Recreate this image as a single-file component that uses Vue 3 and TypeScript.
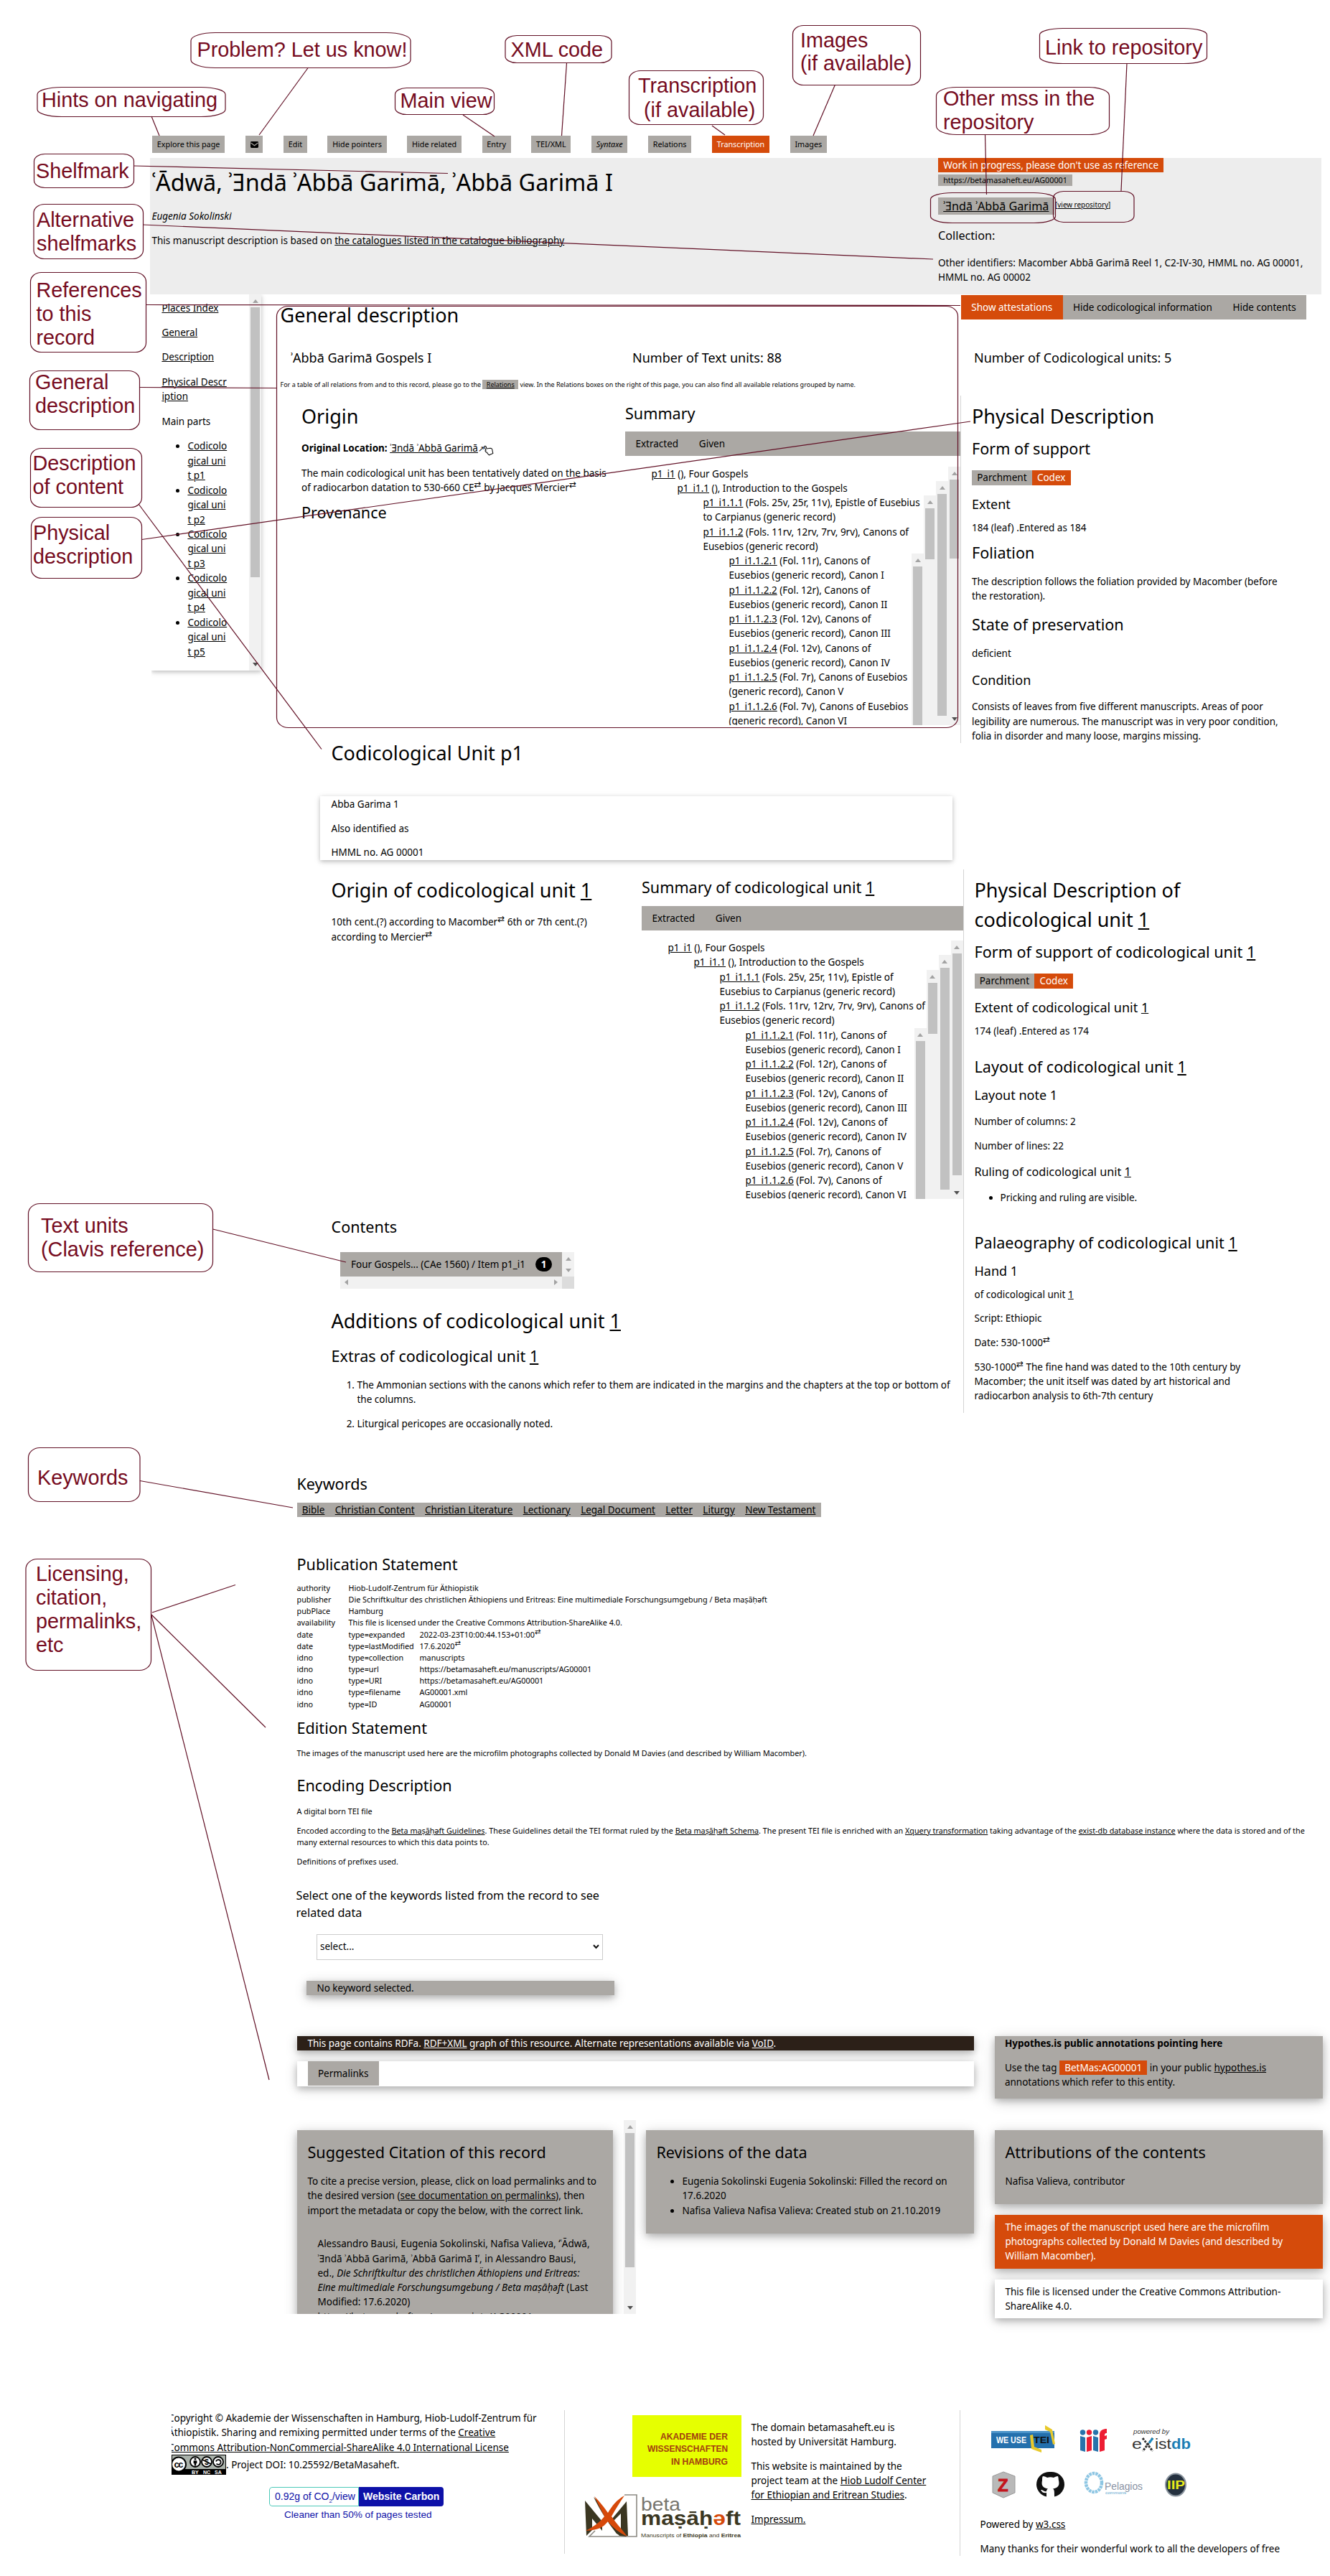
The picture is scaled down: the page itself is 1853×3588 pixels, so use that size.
<script setup lang="ts">
interface Callout {
  x: number
  y: number
  w: number
  h: number
  rx: number
  ry: number
  tx: number
  ty: number
  step?: number
  lines: string[]
}
interface Work {
  id: string
  head: string
  tail: string
}
interface Tree {
  level2: Work[]
  level3: Work[]
}

const toolbar = ['Edit', 'Hide pointers', 'Hide related', 'Entry', 'TEI/XML']

const callouts: Callout[] = [
  { x: 52, y: 121.5, w: 262, h: 41, rx: 34, ry: 10, tx: 58, ty: 148.5, lines: ['Hints on navigating'] },
  { x: 266, y: 45.5, w: 306, h: 49, rx: 34, ry: 11, tx: 274.5, ty: 78.5, lines: ['Problem? Let us know!'] },
  { x: 704, y: 49.5, w: 148, h: 38, rx: 16, ry: 9, tx: 711.5, ty: 78.5, lines: ['XML code'] },
  { x: 550.5, y: 122.5, w: 138, h: 37, rx: 16, ry: 9, tx: 557.5, ty: 149.5, lines: ['Main view'] },
  { x: 876.5, y: 98.5, w: 187, h: 75, rx: 16, ry: 12, tx: 889, ty: 129, step: 33.5, lines: ['Transcription', ' (if available)'] },
  { x: 1104.5, y: 35.5, w: 178, h: 83, rx: 15, ry: 12, tx: 1115, ty: 65.5, step: 32, lines: ['Images', '(if available)'] },
  { x: 1448.5, y: 39.5, w: 233, h: 49, rx: 32, ry: 9, tx: 1456, ty: 75.5, lines: ['Link to repository'] },
  { x: 1304.5, y: 121.5, w: 241, h: 66, rx: 28, ry: 12, tx: 1314, ty: 147, step: 33, lines: ['Other mss in the', 'repository'] },
  { x: 47.5, y: 214.5, w: 139, h: 47, rx: 15, ry: 10, tx: 50, ty: 247.5, lines: ['Shelfmark'] },
  { x: 47, y: 284.5, w: 152.5, h: 76, rx: 15, ry: 12, tx: 51, ty: 316, step: 32.8, lines: ['Alternative', 'shelfmarks'] },
  { x: 42.5, y: 379.5, w: 161, h: 111, rx: 15, ry: 13, tx: 50.5, ty: 414, step: 33, lines: ['References', 'to this', 'record'] },
  { x: 41.5, y: 516.5, w: 153, h: 82, rx: 15, ry: 13, tx: 49, ty: 542, step: 32.7, lines: ['General', 'description'] },
  { x: 42.5, y: 624.5, w: 155, h: 82, rx: 15, ry: 13, tx: 45.5, ty: 655, step: 32.7, lines: ['Description', 'of content'] },
  { x: 43.5, y: 720.5, w: 154, h: 85, rx: 15, ry: 13, tx: 46, ty: 751.8, step: 33, lines: ['Physical', 'description'] },
  { x: 39.5, y: 1676.5, w: 257, h: 95, rx: 16, ry: 14, tx: 57, ty: 1717, step: 32.6, lines: ['Text units', '(Clavis reference)'] },
  { x: 39.5, y: 2016.5, w: 155.5, h: 75, rx: 16, ry: 14, tx: 52, ty: 2068, lines: ['Keywords'] },
  { x: 36, y: 2171.5, w: 174.5, h: 155, rx: 16, ry: 14, tx: 50, ty: 2201.5, step: 33.2, lines: ['Licensing,', 'citation,', 'permalinks,', 'etc'] },
]

const pointers: number[][] = [
  [211, 162, 222, 189],
  [429.5, 94, 361, 188],
  [789.5, 88, 782.5, 189],
  [645, 160, 689, 190],
  [992, 175, 1010, 188],
  [1163.5, 118, 1133, 189],
  [1570, 88, 1562, 266],
  [1372.5, 187, 1374.5, 271],
  [186, 231, 624, 241.5],
  [199, 313, 1300, 361],
  [203.5, 424.5, 1338, 425.5],
  [195, 539.5, 386, 540.5],
  [193, 702, 448, 1043.5],
  [197.5, 751.5, 1352, 587],
  [296.6, 1712, 482, 1758],
  [195, 2062.5, 408, 2100],
  [212, 2246, 328, 2207.5],
  [211, 2249, 370, 2406],
  [211, 2250, 375, 2897],
]

const generic = 'Eusebios (generic record), Canon '
const trees: Tree[] = [
  {
    level2: [
      { id: 'p1_i1.1.1', head: '(Fols. 25v, 25r, 11v), Epistle of Eusebius', tail: 'to Carpianus (generic record)' },
      { id: 'p1_i1.1.2', head: '(Fols. 11rv, 12rv, 7rv, 9rv), Canons of', tail: 'Eusebios (generic record)' },
    ],
    level3: [
      { id: 'p1_i1.1.2.1', head: '(Fol. 11r), Canons of', tail: generic + 'I' },
      { id: 'p1_i1.1.2.2', head: '(Fol. 12r), Canons of', tail: generic + 'II' },
      { id: 'p1_i1.1.2.3', head: '(Fol. 12v), Canons of', tail: generic + 'III' },
      { id: 'p1_i1.1.2.4', head: '(Fol. 12v), Canons of', tail: generic + 'IV' },
      { id: 'p1_i1.1.2.5', head: '(Fol. 7r), Canons of Eusebios', tail: '(generic record), Canon V' },
      { id: 'p1_i1.1.2.6', head: '(Fol. 7v), Canons of Eusebios', tail: '(generic record), Canon VI' },
    ],
  },
  {
    level2: [
      { id: 'p1_i1.1.1', head: '(Fols. 25v, 25r, 11v), Epistle of', tail: 'Eusebius to Carpianus (generic record)' },
      { id: 'p1_i1.1.2', head: '(Fols. 11rv, 12rv, 7rv, 9rv), Canons of', tail: 'Eusebios (generic record)' },
    ],
    level3: [
      { id: 'p1_i1.1.2.1', head: '(Fol. 11r), Canons of', tail: generic + 'I' },
      { id: 'p1_i1.1.2.2', head: '(Fol. 12r), Canons of', tail: generic + 'II' },
      { id: 'p1_i1.1.2.3', head: '(Fol. 12v), Canons of', tail: generic + 'III' },
      { id: 'p1_i1.1.2.4', head: '(Fol. 12v), Canons of', tail: generic + 'IV' },
      { id: 'p1_i1.1.2.5', head: '(Fol. 7r), Canons of', tail: generic + 'V' },
      { id: 'p1_i1.1.2.6', head: '(Fol. 7v), Canons of', tail: generic + 'VI' },
    ],
  },
]

const units = [1, 2, 3, 4, 5]
const keywords = ['Bible', 'Christian Content', 'Christian Literature', 'Lectionary', 'Legal Document', 'Letter', 'Liturgy', 'New Testament']

const statement: { key: string; type?: string; value: string; sup?: boolean }[] = [
  { key: 'authority', value: 'Hiob-Ludolf-Zentrum für Äthiopistik' },
  { key: 'publisher', value: 'Die Schriftkultur des christlichen Äthiopiens und Eritreas: Eine multimediale Forschungsumgebung / Beta maṣāḥəft' },
  { key: 'pubPlace', value: 'Hamburg' },
  { key: 'availability', value: 'This file is licensed under the Creative Commons Attribution-ShareAlike 4.0.' },
  { key: 'date', type: 'expanded', value: '2022-03-23T10:00:44.153+01:00', sup: true },
  { key: 'date', type: 'lastModified', value: '17.6.2020', sup: true },
  { key: 'idno', type: 'collection', value: 'manuscripts' },
  { key: 'idno', type: 'url', value: 'https://betamasaheft.eu/manuscripts/AG00001' },
  { key: 'idno', type: 'URI', value: 'https://betamasaheft.eu/AG00001' },
  { key: 'idno', type: 'filename', value: 'AG00001.xml' },
  { key: 'idno', type: 'ID', value: 'AG00001' },
]
</script>

<template>
  <div class="page">
    <nav class="toolbar">
      <span class="btn">Explore this page</span>
      <span class="btn mail">
        <svg width="11" height="9" viewBox="0 0 11 9"><rect width="11" height="9" rx="1.4" /><path d="M.5 2 L5.5 5.8 L10.5 2" fill="none" stroke="#aba8a4" stroke-width="1.1" /></svg>
      </span>
      <span v-for="t in toolbar" :key="t" class="btn">{{ t }}</span>
      <span class="btn"><em>Syntaxe</em></span>
      <span class="btn">Relations</span>
      <span class="btn hot">Transcription</span>
      <span class="btn">Images</span>
    </nav>

    <header class="head">
      <div class="head-main">
        <h1>ʿĀdwā, ʾƎndā ʾAbbā Garimā, ʾAbbā Garimā I</h1>
        <p><em>Eugenia Sokolinski</em></p>
        <p>This manuscript description is based on <a>the catalogues listed in the catalogue bibliography</a></p>
      </div>
      <div class="head-side">
        <div class="row"><span class="tag hot">Work in progress, please don't use as reference</span></div>
        <div class="row uri"><span class="tag">https://betamasaheft.eu/AG00001</span></div>
        <div class="row repo"><span class="tag"><a>ʾƎndā ʾAbbā Garimā</a></span><span class="view">[<a>view repository</a>]</span></div>
        <div class="collection">Collection:</div>
        <p>Other identifiers: Macomber Abbā Garimā Reel 1, C2-IV-30, HMML no. AG 00001,<br>HMML no. AG 00002</p>
      </div>
    </header>

    <div class="upper">
      <aside class="index">
        <div class="index-list">
          <p><a>Places Index</a></p>
          <p><a>General</a></p>
          <p><a>Description</a></p>
          <p><a>Physical Descr</a><br><a>iption</a></p>
          <p>Main parts</p>
          <ul>
            <li v-for="u in units" :key="u"><a>Codicolo</a><br><a>gical uni</a><br><a>t p{{ u }}</a></li>
          </ul>
        </div>
        <div class="sb"><i class="up"></i><b class="thumb"></b><i class="down"></i></div>
      </aside>
      <div class="general">
        <div class="general-top">
          <h2>General description</h2>
          <div class="switches"><span class="hot">Show attestations</span><span>Hide codicological information</span><span>Hide contents</span></div>
        </div>
        <div class="counts">
          <h4>ʾAbbā Garimā Gospels I</h4>
          <h4>Number of Text units: 88</h4>
          <h4>Number of Codicological units: 5</h4>
        </div>
        <div class="note">For a table of all relations from and to this record, please go to the <span class="tag"><a>Relations</a></span> view. In the Relations boxes on the right of this page, you can also find all available relations grouped by name.</div>
        <div class="cols">
          <section class="origin">
            <h2>Origin</h2>
            <p><strong>Original Location:</strong> <a>ʾƎndā ʾAbbā Garimā</a><span class="ne">↗</span>
              <svg class="hand" width="15" height="15" viewBox="0 0 15 15"><path d="M1.500 2.200 C2.500 .8 4 1.200 4.300 2.500 L5 5 L10 4.200 C12 4.200 13 5.500 13 7.500 L13.800 11.500 L8.500 13.800 L6.500 12 L5.500 10.200 L3.600 9.200 C2.600 8.200 3 7 4 7 L2 3.600 Z" fill="none" stroke="#111" stroke-width="1.1" /></svg>
            </p>
            <p class="dating">The main codicological unit has been tentatively dated on the basis<br>of radiocarbon datation to 530-660 CE<sup>⇄</sup> by Jacques Mercier<sup>⇄</sup></p>
            <h3>Provenance</h3>
          </section>
          <section class="summary">
            <h3>Summary</h3>
            <div class="tabs"><span>Extracted</span><span>Given</span></div>
            <div class="tree first">
              <div class="grow">
                <div><a>p1_i1</a> (), Four Gospels</div>
                <div class="lv l1">
                  <div class="grow">
                    <div><a>p1_i1.1</a> (), Introduction to the Gospels</div>
                    <div class="lv l2">
                      <div class="grow">
                        <div v-for="w in trees[0].level2" :key="w.id"><a>{{ w.id }}</a> {{ w.head }}<br>{{ w.tail }}</div>
                        <div class="lv l3">
                          <div class="grow"><div v-for="w in trees[0].level3" :key="w.id"><a>{{ w.id }}</a> {{ w.head }}<br>{{ w.tail }}</div></div>
                          <div class="sb"><i class="up"></i><b class="thumb"></b></div>
                        </div>
                      </div>
                      <div class="sb"><i class="up"></i><b class="thumb"></b></div>
                    </div>
                  </div>
                  <div class="sb"><i class="up"></i><b class="thumb"></b></div>
                </div>
              </div>
              <div class="sb"><i class="up"></i><b class="thumb"></b><i class="down"></i></div>
            </div>
          </section>
          <section class="physical">
            <h2>Physical Description</h2>
            <h3>Form of support</h3>
            <p class="tags"><span class="tag">Parchment</span><span class="tag hot">Codex</span></p>
            <h4>Extent</h4>
            <div>184 (leaf) .Entered as 184</div>
            <h3>Foliation</h3>
            <p>The description follows the foliation provided by Macomber (before<br>the restoration).</p>
            <h3>State of preservation</h3>
            <p>deficient</p>
            <h4>Condition</h4>
            <p>Consists of leaves from five different manuscripts. Areas of poor<br>legibility are numerous. The manuscript was in very poor condition,<br>folia in disorder and many loose, margins missing.</p>
          </section>
        </div>
      </div>
    </div>

    <div class="unit">
      <h2 class="unit-title">Codicological Unit p1</h2>
      <div class="ident">
        <p>Abba Garima 1</p>
        <p>Also identified as</p>
        <p>HMML no. AG 00001</p>
      </div>
      <div class="unit-cols">
        <div class="unit-left">
          <div class="unit-pair">
            <section class="unit-origin">
              <h2>Origin of codicological unit <a>1</a></h2>
              <p>10th cent.(?) according to Macomber<sup>⇄</sup> 6th or 7th cent.(?)<br>according to Mercier<sup>⇄</sup></p>
            </section>
            <section class="unit-summary">
              <h3>Summary of codicological unit <a>1</a></h3>
              <div class="tabs"><span>Extracted</span><span>Given</span></div>
              <div class="tree second">
                <div class="grow">
                  <div><a>p1_i1</a> (), Four Gospels</div>
                  <div class="lv l1">
                    <div class="grow">
                      <div><a>p1_i1.1</a> (), Introduction to the Gospels</div>
                      <div class="lv l2">
                        <div class="grow">
                          <div v-for="w in trees[1].level2" :key="w.id"><a>{{ w.id }}</a> {{ w.head }}<br>{{ w.tail }}</div>
                          <div class="lv l3">
                            <div class="grow"><div v-for="w in trees[1].level3" :key="w.id"><a>{{ w.id }}</a> {{ w.head }}<br>{{ w.tail }}</div></div>
                            <div class="sb"><i class="up"></i><b class="thumb"></b></div>
                          </div>
                        </div>
                        <div class="sb"><i class="up"></i><b class="thumb"></b></div>
                      </div>
                    </div>
                    <div class="sb"><i class="up"></i><b class="thumb"></b></div>
                  </div>
                </div>
                <div class="sb"><i class="up"></i><b class="thumb"></b><i class="down"></i></div>
              </div>
            </section>
          </div>
          <h3 class="contents-title">Contents</h3>
          <div class="item">
            <div class="item-main">
              <div class="item-row"><span>Four Gospels... (CAe 1560) / Item p1_i1</span><span class="count">1</span></div>
              <div class="hbar"><i class="left"></i><i class="right"></i></div>
            </div>
            <div class="item-side"><div class="vbar"><i class="up"></i><i class="down"></i></div></div>
          </div>
          <h2 class="additions">Additions of codicological unit <a>1</a></h2>
          <h3 class="extras">Extras of codicological unit <a>1</a></h3>
          <ol>
            <li>The Ammonian sections with the canons which refer to them are indicated in the margins and the chapters at the top or bottom of<br>the columns.</li>
            <li>Liturgical pericopes are occasionally noted.</li>
          </ol>
        </div>
        <section class="unit-physical">
          <h2>Physical Description of<br>codicological unit <a>1</a></h2>
          <h3>Form of support of codicological unit <a>1</a></h3>
          <p class="tags"><span class="tag">Parchment</span><span class="tag hot">Codex</span></p>
          <h4>Extent of codicological unit <a>1</a></h4>
          <div>174 (leaf) .Entered as 174</div>
          <h3 class="layout">Layout of codicological unit <a>1</a></h3>
          <h4>Layout note 1</h4>
          <p>Number of columns: 2</p>
          <p>Number of lines: 22</p>
          <h5>Ruling of codicological unit <a>1</a></h5>
          <ul><li>Pricking and ruling are visible.</li></ul>
          <h3 class="palaeo">Palaeography of codicological unit <a>1</a></h3>
          <h4>Hand 1</h4>
          <div>of codicological unit <a>1</a></div>
          <p>Script: Ethiopic</p>
          <p>Date: 530-1000<sup>⇄</sup></p>
          <p>530-1000<sup>⇄</sup> The fine hand was dated to the 10th century by<br>Macomber; the unit itself was dated by art historical and<br>radiocarbon analysis to 6th-7th century</p>
        </section>
      </div>
    </div>

    <div class="meta">
      <h3>Keywords</h3>
      <div class="keywords"><span v-for="k in keywords" :key="k"><a>{{ k }}</a></span></div>
      <h3 class="pub">Publication Statement</h3>
      <div class="statement">
        <div v-for="(s, i) in statement" :key="i" class="srow">
          <span class="k">{{ s.key }}</span><span v-if="s.type" class="t">type={{ s.type }}</span><span>{{ s.value }}<sup v-if="s.sup">⇄</sup></span>
        </div>
      </div>
      <h3 class="edition">Edition Statement</h3>
      <p>The images of the manuscript used here are the microfilm photographs collected by Donald M Davies (and described by William Macomber).</p>
      <h3 class="encoding">Encoding Description</h3>
      <p>A digital born TEI file</p>
      <p>Encoded according to the <a>Beta maṣāḥəft Guidelines</a>. These Guidelines detail the TEI format ruled by the <a>Beta maṣāḥəft Schema</a>. The present TEI file is enriched with an <a>Xquery transformation</a> taking advantage of the <a>exist-db database instance</a> where the data is stored and of the<br>many external resources to which this data points to.</p>
      <p>Definitions of prefixes used.</p>
      <div class="choose">Select one of the keywords listed from the record to see<br>related data</div>
      <div class="select"><span>select...</span><svg width="9" height="7" viewBox="0 0 9 7"><path d="M1 1.3 L4.5 5 L8 1.3" fill="none" stroke="#111" stroke-width="2" /></svg></div>
      <div class="panel nokey">No keyword selected.</div>

      <div class="links">
        <div class="links-left">
          <div class="rdf">This page contains RDFa. <a>RDF+XML</a> graph of this resource. Alternate representations available via <a>VoID</a>.</div>
          <div class="perma"><span>Permalinks</span></div>
        </div>
        <div class="hypo panel">
          <div><strong>Hypothes.is public annotations pointing here</strong></div>
          <p>Use the tag <span class="tag hot">BetMas:AG00001</span> in your public <a>hypothes.is</a><br>annotations which refer to this entity.</p>
        </div>
      </div>

      <div class="credits">
        <div class="cite-wrap">
          <div class="cite-clip">
            <div class="cite panel">
              <h3>Suggested Citation of this record</h3>
              <p>To cite a precise version, please, click on load permalinks and to<br>the desired version (<a>see documentation on permalinks</a>), then<br>import the metadata or copy the below, with the correct link.</p>
              <div class="quote">Alessandro Bausi, Eugenia Sokolinski, Nafisa Valieva, ʻʿĀdwā,<br>ʾƎndā ʾAbbā Garimā, ʾAbbā Garimā Iʼ, in Alessandro Bausi,<br>ed., <em>Die Schriftkultur des christlichen Äthiopiens und Eritreas:<br>Eine multimediale Forschungsumgebung / Beta maṣāḥəft</em> (Last<br>Modified: 17.6.2020)<br>https://betamasaheft.eu/manuscripts/AG00001</div>
            </div>
          </div>
          <div class="sb"><i class="up"></i><b class="thumb"></b><i class="down"></i></div>
        </div>
        <div class="revisions panel">
          <h3>Revisions of the data</h3>
          <ul>
            <li>Eugenia Sokolinski Eugenia Sokolinski: Filled the record on<br>17.6.2020</li>
            <li>Nafisa Valieva Nafisa Valieva: Created stub on 21.10.2019</li>
          </ul>
        </div>
        <div class="attrib">
          <div class="panel who"><h3>Attributions of the contents</h3><p>Nafisa Valieva, contributor</p></div>
          <div class="panel hot photos">The images of the manuscript used here are the microfilm<br>photographs collected by Donald M Davies (and described by<br>William Macomber).</div>
          <div class="panel plain">This file is licensed under the Creative Commons Attribution-<br>ShareAlike 4.0.</div>
        </div>
      </div>
    </div>

    <footer class="foot">
      <section class="legal">
        <div class="legal-text">
          <div>Copyright © Akademie der Wissenschaften in Hamburg, Hiob-Ludolf-Zentrum für</div>
          <div>Äthiopistik. Sharing and remixing permitted under terms of the <a>Creative</a></div>
          <div><a>Commons Attribution-NonCommercial-ShareAlike 4.0 International License</a></div>
        </div>
        <div class="cc">
          <svg width="76" height="28" viewBox="0 0 76 28">
            <rect width="76" height="28" fill="#000" /><rect x="1" y="1" width="74" height="19" fill="#aab2ab" />
            <circle cx="10" cy="13.5" r="10" fill="#fff" stroke="#000" stroke-width="2" />
            <text x="3.6" y="17.6" font-size="13" font-weight="bold" textLength="13">cc</text>
            <g fill="#fff" stroke="#000" stroke-width="1.8"><circle cx="33" cy="10" r="7" /><circle cx="49" cy="10" r="7" /><circle cx="65" cy="10" r="7" /></g>
            <circle cx="33" cy="6" r="1.5" /><path d="M30.6 8.2 h4.8 v4 h-1.2 v3.4 h-2.4 v-3.4 h-1.2 Z" />
            <text x="46" y="14" font-size="10.5" font-weight="bold">$</text><path d="M43 7 L55 13" stroke="#000" stroke-width="1.4" />
            <path d="M62 9.5 a3.4 3.4 0 1 1 .6 3" fill="none" stroke="#000" stroke-width="1.8" />
            <g fill="#fff" font-size="7" font-weight="bold"><text x="28" y="26.6">BY</text><text x="44" y="26.6">NC</text><text x="60" y="26.6">SA</text></g>
          </svg>
          <span>. Project DOI: 10.25592/BetaMasaheft.</span>
        </div>
        <div class="carbon"><span class="grams">0.92g of CO<sub>2</sub>/view</span><span class="brand">Website Carbon</span></div>
        <div class="cleaner">Cleaner than 50% of pages tested</div>
      </section>
      <section class="partners">
        <div class="partner-logos">
          <svg class="akademie" width="152" height="86" viewBox="0 0 152 86">
            <rect width="152" height="86" fill="#e6ff00" />
            <g fill="#a3400f" font-size="12" font-weight="bold">
              <text x="39" y="34" textLength="94" lengthAdjust="spacingAndGlyphs">AKADEMIE DER</text>
              <text x="21" y="51" textLength="112" lengthAdjust="spacingAndGlyphs">WISSENSCHAFTEN</text>
              <text x="54" y="68.5" textLength="79" lengthAdjust="spacingAndGlyphs">IN HAMBURG</text>
            </g>
          </svg>
          <svg class="beta" width="218" height="64" viewBox="0 0 218 64">
            <path d="M55 1 H72 V59 H6 L14 51" fill="none" stroke="#8d8b84" stroke-width="1.6" />
            <path d="M0 9 L24 38 V51 L10 34 V50 L2 58 Z" fill="#3b3722" />
            <path d="M58 10 L33 40 L44 55 L50 58 H60 Z" fill="#3b3722" /><path d="M50 27 V51 L39 38 Z" fill="#fff" />
            <path d="M12 4 C22 14 38 38 58 59 L48 58 C34 44 22 24 12 4 Z" fill="#3b3722" />
            <path d="M13 3 C22 12 28 20 32 26 C38 16 44 8 55 2 C48 12 42 22 37 31 C43 40 50 47 59 59 C48 54 38 46 32 38 C25 47 18 50 1 51 C14 44 22 38 27 31 Z" fill="#d6490a" />
            <text x="78" y="23" font-size="25" fill="#77756d" font-weight="300" textLength="55" lengthAdjust="spacingAndGlyphs">beta</text>
            <text x="78" y="43" font-size="27" font-weight="bold" fill="#3b3722" textLength="139" lengthAdjust="spacingAndGlyphs">maṣāḥ<tspan fill="#d6490a">ə</tspan>ft</text>
            <text x="78" y="60" font-size="7.6" fill="#3b3722" textLength="139" lengthAdjust="spacingAndGlyphs">Manuscripts of <tspan font-weight="bold">Ethiopia</tspan> and <tspan font-weight="bold">Eritrea</tspan></text>
          </svg>
        </div>
        <div class="partner-text">
          <p>The domain betamasaheft.eu is<br>hosted by Universität Hamburg.</p>
          <p>This website is maintained by the<br>project team at the <a>Hiob Ludolf Center</a><br><a>for Ethiopian and Eritrean Studies</a>.</p>
          <p><a>Impressum.</a></p>
        </div>
      </section>
      <section class="tools">
        <svg class="logos" width="310" height="110" viewBox="0 0 310 110">
          <rect x="0" y="8" width="88" height="24" fill="#2470ad" /><rect x="0" y="8" width="88" height="3" fill="#4b93c9" />
          <path d="M75 0 L85 6 L89 26 L86 27 L82 9 L75 6 Z M54 14 L58 13 L60 30 L70 34 L70 38 L56 33 Z" fill="#e8c92b" />
          <text x="7" y="24.5" font-size="12" font-weight="bold" fill="#fff" textLength="42" lengthAdjust="spacingAndGlyphs">WE USE</text>
          <text x="59" y="24.5" font-size="12" font-weight="bold" fill="#111" textLength="22" lengthAdjust="spacingAndGlyphs">TEI</text>
          <g transform="translate(123 4)">
            <path d="M1 11 L8 13 V33 L1 31 Z" fill="#2873ab" /><circle cx="4.5" cy="6" r="3.7" fill="#2873ab" />
            <path d="M10 13 L17 11 V31 L10 33 Z" fill="#ed1d33" /><circle cx="13.5" cy="6" r="3.7" fill="#ed1d33" />
            <path d="M19 11 L26 13 V33 L19 31 Z" fill="#2873ab" /><circle cx="22.5" cy="6" r="3.7" fill="#2873ab" />
            <path d="M28 33 V9 C28 3 33 1 38 1 V7 C35 7 35 9 35 11 L38 10 V15 L35 16 V31 Z" fill="#ed1d33" />
          </g>
          <text x="198" y="12" font-size="9" font-style="italic" fill="#333" textLength="50" lengthAdjust="spacingAndGlyphs">powered by</text>
          <text x="196" y="33" font-size="21" fill="#333" textLength="14" lengthAdjust="spacingAndGlyphs">e</text>
          <path d="M211 18 L225 36 M225 18 L211 36" stroke="#333" stroke-width="3" stroke-dasharray="3 1.5" /><path d="M225 18 L220 25" stroke="#1c8bc0" stroke-width="3" />
          <text x="228" y="33" font-size="21" fill="#333" textLength="23" lengthAdjust="spacingAndGlyphs">ist</text>
          <text x="251" y="33" font-size="21" font-weight="bold" fill="#1c7fb5" textLength="27" lengthAdjust="spacingAndGlyphs">db</text>
          <path d="M17 65 L33 71 V94 L17 101 L2 94 V71 Z" fill="#b9b9b9" stroke="#999" /><text x="9" y="92" font-size="24" font-weight="bold" fill="#c3151b" stroke="#c3151b">Z</text>
          <path d="M82.500 65 A18 17.500 0 0 0 77 99.500 V94 C71 95 70.500 92 69 90 C73 90 73 93 77 92 C77 90 78 89 79 88.500 C70 87 70 82 71 77 C71 74 71 72 72 71 C75 71 76 72 78 73 C81 72 84 72 87 73 C89 72 90 71 93 71 C94 74 93.500 75 94 77 C95 82 95 87 86 88.500 C88 90 88 92 88 99.500 A18 17.500 0 0 0 82.500 65 Z" fill="#111" />
          <ellipse cx="143" cy="80" rx="11" ry="13" fill="none" stroke="#8ec6e3" stroke-width="4.500" stroke-dasharray="3.500 1" />
          <text x="158" y="90" font-size="15" fill="#8a93a5" textLength="53" lengthAdjust="spacingAndGlyphs">Pelagios</text>
          <text x="159" y="96" font-size="5" fill="#5ba7cf" textLength="29" lengthAdjust="spacingAndGlyphs">commons</text>
          <ellipse cx="257" cy="83" rx="14" ry="15.500" fill="#25313f" stroke="#8a949e" stroke-width="2" /><text x="245" y="89" font-size="16" font-weight="bold" fill="#e8ec1a" textLength="25" lengthAdjust="spacingAndGlyphs">IIP</text>
        </svg>
        <p>Powered by <a>w3.css</a></p>
        <p>Many thanks for their wonderful work to all the developers of free</p>
      </section>
    </footer>

    <svg class="annotations" width="1853" height="3588" viewBox="0 0 1853 3588">
      <g class="ink">
        <rect v-for="(c, i) in callouts" :key="'c' + i" :x="c.x" :y="c.y" :width="c.w" :height="c.h" :rx="c.rx" :ry="c.ry" />
        <rect x="1296.500" y="268.500" width="174" height="42" rx="30" ry="9" />
        <rect x="1467.500" y="266.500" width="112.500" height="43" rx="14" ry="9" />
        <rect x="385.500" y="426.500" width="949" height="587" rx="16" ry="14" />
        <line v-for="(p, i) in pointers" :key="'p' + i" :x1="p[0]" :y1="p[1]" :x2="p[2]" :y2="p[3]" />
      </g>
      <g v-for="(c, i) in callouts" :key="'t' + i" class="label">
        <text v-for="(l, j) in c.lines" :key="j" :x="c.tx" :y="c.ty + j * (c.step ?? 0)">{{ l }}</text>
      </g>
    </svg>
  </div>
</template>

<style>
body { margin: 0; background: #fff; }
</style>

<style scoped>
.page {
  position: relative;
  width: 1853px;
  height: 3588px;
  overflow: hidden;
  background: #fff;
  color: #000;
  font-family: "Noto Sans", "Open Sans", sans-serif;
  font-size: 13.5px;
  line-height: 20.25px;
  white-space: nowrap;
}
a { text-decoration: underline; }
h1, h2, h3, h4, h5 { margin: 9px 0; font-weight: 400; line-height: 1.5; }
h1 { font-size: 32.4px; }
h2 { font-size: 27px; }
h3 { font-size: 21.6px; }
h4 { font-size: 18px; }
h5 { font-size: 16.2px; }
p { margin: 13.5px 0; }
ul, ol { margin: 13.5px 0; padding-left: 36px; }
sup { font-size: 12px; line-height: 0; font-family: "DejaVu Sans", sans-serif; }
.tag { display: inline-block; padding: 0 7.2px; background: #aba8a4; }

.toolbar { display: flex; gap: 28.6px; padding: 189.4px 0 0 212px; height: 23.4px; font-size: 10.8px; line-height: 16.2px; }
.btn { padding: 3.6px 6.8px; background: #aba8a4; }
.mail { display: flex; align-items: center; }
.hot, .tag.hot, .btn.hot { background: #d54b0b; color: #fff; }

.head { display: flex; margin: 7.2px 0 0 209px; width: 1632px; height: 190px; background: #ededed; }
.head-main { width: 1095.5px; padding-left: 2.5px; }
.head-side { display: flow-root; }
.row { height: 20.25px; }
.uri { margin-top: 2.5px; height: 16.2px; font-size: 10.8px; line-height: 16.2px; }
.repo { display: flex; align-items: flex-start; margin-top: 16px; height: 24.3px; font-size: 16.2px; line-height: 24.3px; }
.view { padding-left: 1.5px; font-size: 9.9px; line-height: 20px; }
.collection { margin-top: 16.5px; font-size: 16.2px; line-height: 24.3px; }
.head-side p { margin-top: 15.500px; }

.upper { display: flex; height: 611px; margin-left: 211px; }
.index { display: flex; width: 153px; height: 524px; box-shadow: 0 2px 5px rgba(0, 0, 0, .16), 0 2px 9px rgba(0, 0, 0, .12); clip-path: inset(0 -10px -14px 0); }
.index-list { flex: 1; padding-left: 14.4px; margin-top: -5.600px; overflow: hidden; }
.index p { margin: 14.200px 0; }
.index ul { margin: 14.500px 0 0; line-height: 20.450px; }
.sb { flex: none; display: flex; flex-direction: column; align-items: center; width: 17px; background: #f1f1f1; }
.up { margin: 7px 0 6px; border: 4px solid transparent; border-top: 0; border-bottom: 5px solid #a3a3a3; }
.down { margin: auto 0 6px; border: 4px solid transparent; border-bottom: 0; border-top: 5px solid #505050; }
.thumb { flex: none; width: 13px; height: 376px; background: #c1c1c1; }

.general { width: 1478px; }
.general-top { display: flex; justify-content: space-between; height: 74.8px; padding-left: 26.500px; }
.general-top h2 { margin-top: 9px; }
.switches { display: flex; align-self: flex-start; margin: 1px 22px 0 0; background: #aba8a4; }
.switches span { padding: 6.800px 14.4px; }
.counts { display: flex; padding-left: 41px; }
.counts h4 { margin: 0; width: 476px; }
.note { margin: 17px 0 0 26.500px; font-size: 9px; line-height: 13.500px; }
.note .tag { padding: 0 5.400px; }
.cols { display: flex; margin-top: 8.700px; padding-left: 56px; }
.origin { width: 451px; }
.origin h2, .summary h3, .physical h2, .unit-origin h2, .unit-summary h3, .unit-physical h2 { margin-top: 9px; }
.dating { margin-bottom: 9px; }
.ne { font-size: 11px; }
.hand { vertical-align: -3px; margin: -3px 0 -3px -2px; }
.summary { width: 467px; }
.tabs { display: flex; background: #aba8a4; padding: 6.750px 0; }
.tabs span { padding: 0 14.400px; }
.physical { box-sizing: border-box; width: 504px; height: 484px; border-left: 1px solid #d4d4d4; padding-left: 15px; }
.tags .tag { vertical-align: top; }

.tree { display: flex; height: 360px; margin-top: 14.500px; padding-left: 36.500px; overflow: hidden; }
.grow { flex: 1; }
.lv { display: flex; padding-left: 36px; min-height: 360px; }
.tree .thumb { height: 309px; }
.tree.first > .sb .thumb { height: 110px; }
.tree .l2 > .sb .thumb { height: 71px; }
.tree .l3 > .sb .thumb { height: 400px; }

.unit { display: flow-root; margin-left: 446px; height: 1009px; }
.unit-title { margin: 8.500px 0 0 15.500px; }
.ident { display: flow-root; width: 881px; height: 88px; margin-top: 39px; padding-top: 1px; box-shadow: 0 2px 5px rgba(0, 0, 0, .16), 0 2px 9px rgba(0, 0, 0, .14); }
.ident p { margin: 0 0 13.500px 15.500px; }
.unit-cols { display: flex; margin-top: 13.500px; padding-left: 15.500px; }
.unit-left { width: 880px; }
.unit-pair { display: flex; height: 470px; }
.unit-origin { width: 432.500px; }
.unit-summary { width: 447.500px; }
.contents-title { margin: 11.300px 0 0; }
.item { display: flex; width: 326px; height: 51px; margin: 18.800px 0 0 12.500px; }
.item-main { width: 309px; }
.item-row { display: flex; align-items: center; justify-content: space-between; height: 34px; padding: 0 14px 0 15px; background: #aba8a4; }
.count { width: 23px; height: 20px; border-radius: 12px; background: #000; color: #fff; font-weight: bold; text-align: center; }
.hbar { display: flex; align-items: center; justify-content: space-between; height: 17px; padding: 0 6px; background: #f1f1f1; }
.left { border: 4px solid transparent; border-left: 0; border-right: 5px solid #a3a3a3; }
.right { border: 4px solid transparent; border-right: 0; border-left: 5px solid #a3a3a3; }
.item-side { width: 17px; background: #dcdcdc; }
.vbar { display: flex; flex-direction: column; align-items: center; height: 34px; background: #f1f1f1; }
.vbar .down { border-top-color: #a3a3a3; }
.additions { margin: 24.700px 0 0; }
.extras { margin: 12.600px 0 0; }
.unit-left ol { margin-top: 13.700px; }
.unit-left li + li { margin-top: 13.500px; }
.unit-physical { box-sizing: border-box; flex: 1; height: 757px; border-left: 1px solid #d4d4d4; padding-left: 15px; }
.unit-physical .layout { margin-top: 24px; }
.unit-physical .palaeo { margin-top: 37.500px; }

.meta { display: flow-root; margin-left: 413.500px; }
.meta > h3 { margin: 20.800px 0 0; }
.keywords { display: flex; width: max-content; margin-top: 9.800px; background: #aba8a4; }
.keywords span { padding: 0 7.200px; }
.meta > h3.pub { margin-top: 49.500px; }
.statement { margin-top: 8.700px; font-size: 10.800px; line-height: 16.200px; }
.srow { display: flex; height: 16.200px; }
.srow .k { width: 72px; }
.srow .t { width: 99px; }
.statement sup { font-size: 10px; }
.meta > h3.edition { margin-top: 9.300px; }
.meta > p { margin: 10.800px 0 0; font-size: 10.800px; line-height: 16.200px; }
.choose { margin: 26.800px 0 0 -1px; font-size: 16.200px; line-height: 24.300px; }
.select { display: flex; align-items: center; justify-content: space-between; box-sizing: border-box; width: 399px; height: 36px; margin: 17.200px 0 0 27.500px; padding: 0 4px; border: 1px solid #ccc; }
.panel { background: #aba8a4; padding: 0 14.400px; box-shadow: 0 3.600px 9px rgba(0, 0, 0, .2), 0 3.600px 18px rgba(0, 0, 0, .19); }
.panel.hot { background: #d54b0b; }
.panel.plain { background: #fff; }
.nokey { box-sizing: border-box; width: 428.500px; margin: 29.400px 0 0 13.500px; }

.links { display: flex; gap: 29px; margin-top: 56.700px; height: 117px; align-items: flex-start; }
.links-left { width: 943px; }
.rdf { padding: 0 15px; background: #2c2018; color: #fff; box-shadow: 0 3.600px 9px rgba(0, 0, 0, .2), 0 3.600px 18px rgba(0, 0, 0, .19); }
.perma { margin-top: 15px; height: 35px; padding-left: 15px; background: #fff; box-shadow: 0 3.600px 9px rgba(0, 0, 0, .2), 0 3.600px 18px rgba(0, 0, 0, .19); }
.perma span { display: inline-block; padding: 6.900px 14.400px; background: #aba8a4; }
.hypo { box-sizing: border-box; width: 457px; height: 87.500px; }

.credits { display: flex; align-items: flex-start; margin-left: -20px; }
.cite-wrap { display: flex; width: 492.500px; height: 270px; }
.cite-clip { flex: 1; overflow: hidden; padding: 14px 0 0 20px; }
.cite { box-sizing: border-box; width: 440px; height: 300px; display: flow-root; padding: 6.500px 15px; }
.cite h3, .revisions h3, .who h3 { margin: 9px 0; }
.quote { margin: 26.500px 0 0 14px; }
.cite-wrap .thumb { height: 187px; }
.revisions { box-sizing: border-box; display: flow-root; width: 457px; height: 144px; margin: 14px 0 0 14px; padding-top: 6.500px; }
.attrib { margin: 14px 0 0 29px; width: 457px; }
.who { box-sizing: border-box; display: flow-root; height: 103px; padding-top: 6.500px; }
.photos { margin-top: 15px; padding-top: 7px; padding-bottom: 7px; }
.plain { margin-top: 15px; padding-top: 7px; padding-bottom: 7px; }

.foot { display: flex; margin: 128px 0 0 239px; }
.legal { width: 547px; height: 200px; }
.legal-text { width: 520px; overflow: hidden; padding-top: 1px; }
.legal-text div { margin-left: -5px; }
.cc { display: flex; align-items: center; height: 28px; }
.carbon { display: flex; width: 243px; height: 27px; margin: 17px 0 0 136px; font-family: "Liberation Sans", Arial, sans-serif; line-height: 25px; border-radius: 4px; overflow: hidden; }
.grams { box-sizing: border-box; width: 125px; padding-left: 7px; border: 1px solid #4cc9b8; border-radius: 4px 0 0 4px; color: #0e11a8; font-size: 14px; }
.grams sub { font-size: 8px; line-height: 0; }
.brand { flex: 1; padding-left: 6px; background: #0e11a8; color: #fff; font-weight: bold; font-size: 14px; line-height: 27px; }
.cleaner { margin: 2px 0 0 157px; color: #0e11a8; font-family: "Liberation Sans", Arial, sans-serif; font-size: 13.600px; }
.partners { box-sizing: border-box; display: flex; width: 550.500px; height: 200px; border-left: 1px solid #d4d4d4; padding-left: 28px; }
.partner-logos { display: flex; flex-direction: column; align-items: flex-end; width: 218px; padding-top: 7px; }
.akademie, .beta { flex: none; display: block; }
.beta { margin-top: 24px; }
.partner-text { padding-left: 13.500px; }
.partner-text p { margin: 13.500px 0; }
.tools { box-sizing: border-box; flex: 1; height: 203px; border-left: 1px solid #d4d4d4; padding: 21px 0 0 28px; }
.logos { display: block; margin-left: 15px; }
.tools p:first-of-type { margin-top: 18px; }
text { font-family: "Liberation Sans", Arial, sans-serif; }

.annotations { position: absolute; left: 0; top: 0; }
.ink { fill: none; stroke: #621126; stroke-width: 1.200; }
.label text { font-size: 28.800px; fill: #760b20; white-space: pre; }
</style>
